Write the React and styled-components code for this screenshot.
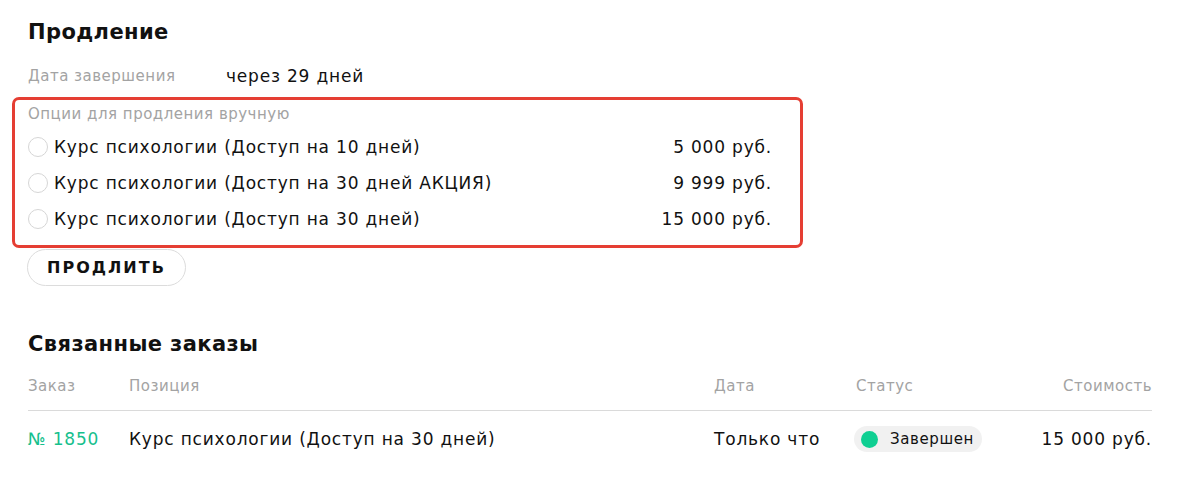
import React from "react";
import styled, { createGlobalStyle } from "styled-components";

const GlobalStyle = createGlobalStyle`
    body {
        margin: 0;
        background: #fff;
        font-family: "DejaVu Sans", "Noto Sans", sans-serif;
        color: #111;
    }
`;

const Page = styled.div`
    padding: 14px 43px 0 28px;
    width: 1124px;
`;

const Title = styled.h2`
    margin: 0;
    font-size: 21px;
    font-weight: 700;
    letter-spacing: 0.4px;
    line-height: 36px;
`;

const InfoRow = styled.div`
    display: flex;
    align-items: center;
    margin-top: 4px;
    height: 43px;
`;

const Muted = styled.span`
    color: #a3a3a3;
    font-size: 15px;
    letter-spacing: 0.5px;
`;

const InfoLabel = styled(Muted)`
    width: 198px;
`;

const Text = styled.span`
    font-size: 17px;
    letter-spacing: 0.8px;
`;

const OptionsBox = styled.div`
    margin-left: -16px;
    width: 791px;
    box-sizing: border-box;
    border: 3px solid #e53e33;
    border-radius: 7px;
    padding: 2px 28px 8px 13px;
`;

const OptionsCaption = styled(Muted)`
    display: block;
    line-height: 24px;
    margin-bottom: 3px;
`;

const Option = styled.label`
    display: flex;
    align-items: center;
    height: 36px;
    font-size: 17px;
    letter-spacing: 0.8px;
    cursor: pointer;
`;

const Radio = styled.span`
    width: 18px;
    height: 18px;
    border-radius: 50%;
    border: 1px solid #d6d6d6;
    margin-right: 6px;
    flex-shrink: 0;
`;

const OptionName = styled.span`
    flex: 1;
`;

const ExtendButton = styled.button`
    display: block;
    margin-top: 1px;
    margin-left: -1px;
    height: 37px;
    width: 159px;
    padding: 0;
    border: 1px solid #dcdcdc;
    border-radius: 19px;
    background: #fff;
    font-family: inherit;
    font-size: 16px;
    font-weight: 700;
    letter-spacing: 2px;
    color: #111;
`;

const RelatedTitle = styled(Title)`
    margin-top: 40px;
`;

const Row = styled.div`
    display: grid;
    grid-template-columns: 101px 585px 142px 1fr auto;
    align-items: center;
    height: ${p => (p.$head ? "48px" : "56px")};
    border-bottom: ${p => (p.$head ? "1px solid #dadada" : "none")};
    font-size: ${p => (p.$head ? "15px" : "17px")};
    letter-spacing: ${p => (p.$head ? "0.5px" : "0.8px")};
    color: ${p => (p.$head ? "#a3a3a3" : "#111")};
`;

const OrderLink = styled.a`
    color: #16c08d;
    text-decoration: none;
`;

const Right = styled.span`
    text-align: right;
`;

const Badge = styled.span`
    display: inline-flex;
    align-items: center;
    gap: 12px;
    justify-self: start;
    margin-left: -2px;
    height: 26px;
    padding: 0 8px 0 7px;
    border-radius: 13px;
    background: #f1f1f1;
    font-size: 15px;
    letter-spacing: 0.6px;
`;

const Dot = styled.span`
    width: 17px;
    height: 17px;
    border-radius: 50%;
    background: #0fcf92;
`;

const options = [
    { name: "Курс психологии (Доступ на 10 дней)", price: "5 000 руб." },
    { name: "Курс психологии (Доступ на 30 дней АКЦИЯ)", price: "9 999 руб." },
    { name: "Курс психологии (Доступ на 30 дней)", price: "15 000 руб." },
];

export default function App() {
    return (
        <>
            <GlobalStyle />
            <Page>
                <Title>Продление</Title>
                <InfoRow>
                    <InfoLabel>Дата завершения</InfoLabel>
                    <Text>через 29 дней</Text>
                </InfoRow>
                <OptionsBox>
                    <OptionsCaption>Опции для продления вручную</OptionsCaption>
                    {options.map(o => (
                        <Option key={o.name}>
                            <Radio />
                            <OptionName>{o.name}</OptionName>
                            <span>{o.price}</span>
                        </Option>
                    ))}
                </OptionsBox>
                <ExtendButton>ПРОДЛИТЬ</ExtendButton>

                <RelatedTitle>Связанные заказы</RelatedTitle>
                <div>
                    <Row $head>
                        <span>Заказ</span>
                        <span>Позиция</span>
                        <span>Дата</span>
                        <span>Статус</span>
                        <Right>Стоимость</Right>
                    </Row>
                    <Row>
                        <OrderLink href="#">№ 1850</OrderLink>
                        <span>Курс психологии (Доступ на 30 дней)</span>
                        <span>Только что</span>
                        <Badge>
                            <Dot />
                            Завершен
                        </Badge>
                        <Right>15 000 руб.</Right>
                    </Row>
                </div>
            </Page>
        </>
    );
}
